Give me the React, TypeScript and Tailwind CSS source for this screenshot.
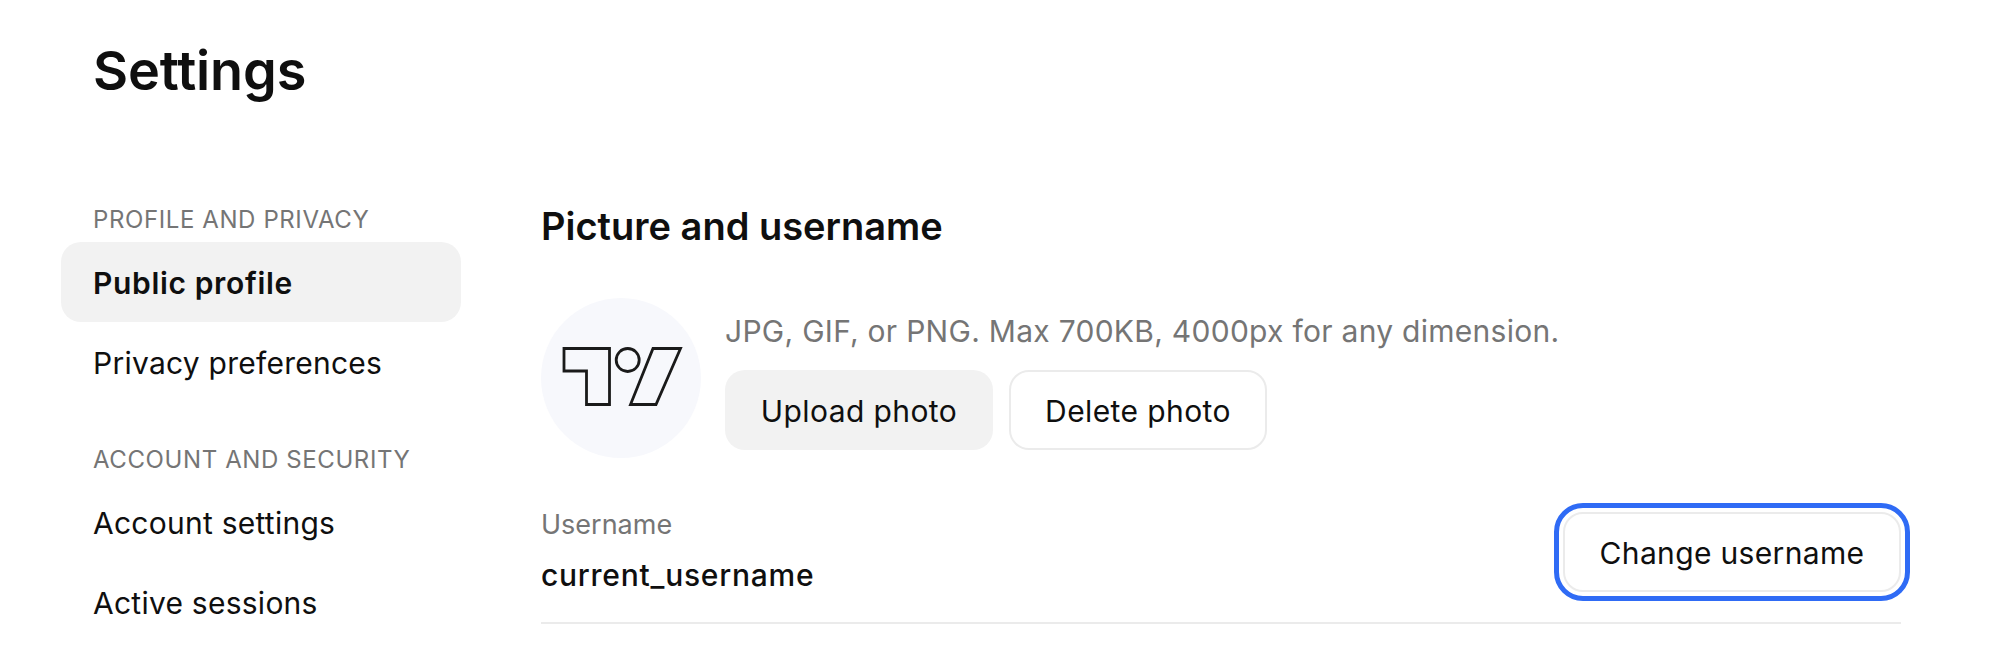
const Logo = () => (
  <svg width="160" height="160" viewBox="0 0 160 160" fill="none" stroke="#1a1a1a" strokeWidth="2.8">
    <path d="M23 50.5H68.5V106.5H45.5V73H23Z" />
    <circle cx="86.7" cy="62" r="11.5" />
    <path d="M112 50.5H139.5L115 106.5H89.5Z" />
  </svg>
);

const SideLabel = ({ text, className }: { text: string; className?: string }) => (
  <div className={`px-8 h-8 mb-2 pt-[3px] flex items-center text-[24px] leading-8 tracking-[0.6px] text-[#757575] ${className ?? ""}`}>
    {text}
  </div>
);

const SideItem = ({ text, active }: { text: string; active?: boolean }) => (
  <div
    className={`h-20 px-8 pt-[2px] flex items-center rounded-[20px] text-[30px] ${
      active ? "bg-[#f2f2f2] font-semibold tracking-[0.65px]" : "tracking-[0.25px]"
    }`}
  >
    {text}
  </div>
);

export default function App() {
  return (
    <div className="h-[662px] overflow-hidden bg-white text-[#0f0f0f] font-['Inter',sans-serif]">
      <h1 className="pl-[93px] pt-[36px] h-[202px] text-[54px] leading-[70px] font-semibold tracking-[-0.1px]">Settings</h1>

      <div className="flex pl-[61px]">
        <aside className="w-[400px] shrink-0">
          <SideLabel text="PROFILE AND PRIVACY" />
          <SideItem text="Public profile" active />
          <SideItem text="Privacy preferences" />
          <SideLabel text="ACCOUNT AND SECURITY" className="mt-10" />
          <SideItem text="Account settings" />
          <SideItem text="Active sessions" />
        </aside>

        <main className="ml-20 w-[1360px]">
          <h2 className="h-12 text-[38px] leading-[48px] font-semibold">Picture and username</h2>

          <div className="flex mt-12 gap-6">
            <div className="w-40 h-40 rounded-full bg-[#f7f8fc]">
              <Logo />
            </div>
            <div>
              <p className="h-[72px] pt-[15px] text-[30px] leading-9 tracking-[0.28px] text-[#757575]">
                JPG, GIF, or PNG. Max 700KB, 4000px for any dimension.
              </p>
              <div className="flex gap-4">
                <button className="h-20 w-[268px] pt-[2px] rounded-[20px] bg-[#f2f2f2] text-[30px] tracking-[0.4px]">Upload photo</button>
                <button className="h-20 w-[258px] pt-[2px] rounded-[20px] border-2 border-[#ebebeb] text-[30px] tracking-[0.4px]">Delete photo</button>
              </div>
            </div>
          </div>

          <div className="flex items-start justify-between mt-[49px] pb-[29px] border-b-2 border-[#ebebeb]">
            <div>
              <div className="text-[27px] leading-9 text-[#757575]">Username</div>
              <div className="mt-[14px] text-[30px] leading-9 font-medium tracking-[0.75px]">current_username</div>
            </div>
            <button className="mt-[5px] h-20 w-[338px] pt-[2px] rounded-[20px] border-2 border-[#ebebeb] text-[30px] tracking-[0.34px] outline-[5px] outline-offset-[4px] outline-[#2f6bf5]">
              Change username
            </button>
          </div>
        </main>
      </div>
    </div>
  );
}
